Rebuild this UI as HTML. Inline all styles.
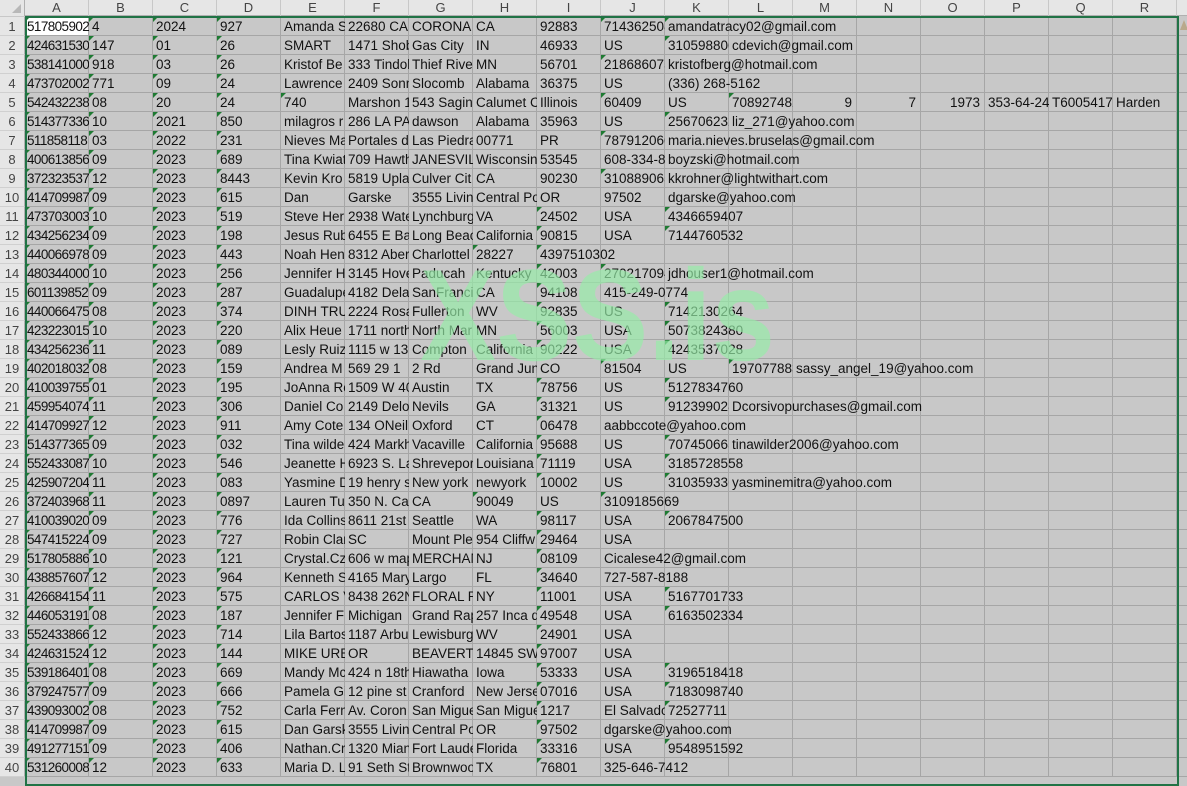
<!DOCTYPE html>
<html><head><meta charset="utf-8"><style>
*{margin:0;padding:0;box-sizing:border-box}
body{width:1187px;height:777px;overflow:hidden;background:#c8c8c8;font-family:"Liberation Sans",sans-serif;position:relative}
.hdr{position:absolute;left:0;top:0;width:1187px;height:16px;background:#e6e6e6;border-bottom:1px solid #b0b0b0;font-size:13px;color:#444}
.hdr span{position:absolute;top:0;width:64px;height:16px;line-height:16px;text-align:center;border-right:1px solid #c8c8c8}
.corner{position:absolute;left:0;top:0;width:25px;height:16px;background:#e6e6e6;border-right:1px solid #b0b0b0}
.corner:after{content:"";position:absolute;right:3px;bottom:3px;border-left:9px solid transparent;border-bottom:9px solid #b8b8b8}
.grid{position:absolute;left:25px;top:17px;width:1162px;height:760px;
background-image:linear-gradient(to right,#a6a6a6 1px,transparent 1px),linear-gradient(to bottom,#a6a6a6 1px,transparent 1px);
background-size:64px 19px;background-position:-1px 0,0 -1px}
.rows{position:absolute;left:0;top:17px}
.r{height:19px;white-space:nowrap;font-size:13.5px;line-height:19px;color:#111}
.r span{display:inline-block;vertical-align:top;width:64px;height:18px;position:relative;padding-left:3px}
.r span:not(:empty){background:#c8c8c8;border-right:1px solid #a6a6a6}
.r span:nth-child(2){letter-spacing:-0.6px;padding-left:2px}
.r span.h{width:25px;background:#e6e6e6;border-right:1px solid #b0b0b0;color:#444;text-align:center;padding:0;font-size:13px;height:19px;border-bottom:1px solid #d0d0d0;letter-spacing:0}
.r span.n{text-align:right;padding-right:4px}
.r span:nth-child(-n+5):not(:first-child):not(:empty):before,.r span.t:before{content:"";position:absolute;left:0;top:0;border-top:5px solid #1e7a32;border-right:5px solid transparent}
.r span.w{background:#fff}
.sel{position:absolute;left:25px;top:16px;width:1154px;height:770px;border:2px solid #217346}
.wm{position:absolute;left:0;top:0;z-index:5}
.warn{position:absolute;left:1180px;top:20px;border-left:4px solid transparent;border-right:4px solid transparent;border-bottom:10px solid #b9a98c}
</style></head><body>
<div class="grid"></div>
<div class="hdr"><span style="left:25px">A</span><span style="left:89px">B</span><span style="left:153px">C</span><span style="left:217px">D</span><span style="left:281px">E</span><span style="left:345px">F</span><span style="left:409px">G</span><span style="left:473px">H</span><span style="left:537px">I</span><span style="left:601px">J</span><span style="left:665px">K</span><span style="left:729px">L</span><span style="left:793px">M</span><span style="left:857px">N</span><span style="left:921px">O</span><span style="left:985px">P</span><span style="left:1049px">Q</span><span style="left:1113px">R</span></div>
<div class="corner"></div>
<div class="rows">
<div class="r"><span class="h">1</span><span class="w">517805902</span><span>4</span><span> 2024</span><span>927</span><span>Amanda S</span><span>22680 CAN</span><span>CORONA</span><span>CA</span><span>92883</span><span class="t">714362508</span><span class="t">amandatracy02@gmail.com</span></div>
<div class="r"><span class="h">2</span><span>424631530</span><span>147</span><span>01</span><span>26</span><span>SMART</span><span>1471 Shob</span><span>Gas City</span><span>IN</span><span>46933</span><span>US</span><span class="t">310598800</span><span>cdevich@gmail.com</span></div>
<div class="r"><span class="h">3</span><span>538141000</span><span>918</span><span>03</span><span>26</span><span>Kristof Be</span><span>333 Tindol</span><span>Thief Rive</span><span>MN</span><span>56701</span><span class="t">218686075</span><span>kristofberg@hotmail.com</span></div>
<div class="r"><span class="h">4</span><span>473702002</span><span>771</span><span>09</span><span>24</span><span>Lawrence</span><span>2409 Sonn</span><span>Slocomb</span><span>Alabama</span><span>36375</span><span>US</span><span>(336) 268-5162</span></div>
<div class="r"><span class="h">5</span><span>542432238</span><span>08</span><span>20</span><span>24</span><span class="t">740</span><span>Marshon 1</span><span>543 Sagina</span><span>Calumet C</span><span>Illinois</span><span class="t">60409</span><span>US</span><span class="t">708927482</span><span class="n">9</span><span class="n">7</span><span class="n">1973</span><span>353-64-24</span><span>T60054173</span><span>Harden</span></div>
<div class="r"><span class="h">6</span><span>514377336</span><span>10</span><span>2021</span><span>850</span><span>milagros r</span><span>286 LA PA</span><span>dawson</span><span>Alabama</span><span>35963</span><span>US</span><span class="t">256706232</span><span>liz_271@yahoo.com</span></div>
<div class="r"><span class="h">7</span><span>511858118</span><span>03</span><span>2022</span><span>231</span><span>Nieves Ma</span><span>Portales d</span><span>Las Piedra</span><span>00771</span><span>PR</span><span class="t">787912060</span><span>maria.nieves.bruselas@gmail.com</span></div>
<div class="r"><span class="h">8</span><span>400613856</span><span>09</span><span>2023</span><span>689</span><span>Tina Kwiat</span><span>709 Hawth</span><span>JANESVILL</span><span>Wisconsin</span><span>53545</span><span>608-334-8(</span><span>boyzski@hotmail.com</span></div>
<div class="r"><span class="h">9</span><span>372323537</span><span>12</span><span>2023</span><span>8443</span><span>Kevin Kro</span><span>5819 Uplai</span><span>Culver Cit</span><span>CA</span><span>90230</span><span class="t">310889065</span><span>kkrohner@lightwithart.com</span></div>
<div class="r"><span class="h">10</span><span>414709987</span><span>09</span><span>2023</span><span>615</span><span>Dan</span><span>Garske</span><span>3555 Livin</span><span>Central Po</span><span>OR</span><span>97502</span><span>dgarske@yahoo.com</span></div>
<div class="r"><span class="h">11</span><span>473703003</span><span>10</span><span>2023</span><span>519</span><span>Steve Her</span><span>2938 Wate</span><span>Lynchburg</span><span>VA</span><span class="t">24502</span><span>USA</span><span class="t">4346659407</span></div>
<div class="r"><span class="h">12</span><span>434256234</span><span>09</span><span>2023</span><span>198</span><span>Jesus Rub</span><span>6455 E Bay</span><span>Long Beac</span><span>California</span><span class="t">90815</span><span>USA</span><span class="t">7144760532</span></div>
<div class="r"><span class="h">13</span><span>440066978</span><span>09</span><span>2023</span><span>443</span><span>Noah Hen</span><span>8312 Aber</span><span>Charlottel</span><span class="t">28227</span><span class="t">4397510302</span></div>
<div class="r"><span class="h">14</span><span>480344000</span><span>10</span><span>2023</span><span>256</span><span>Jennifer H</span><span>3145 Hove</span><span>Paducah</span><span>Kentucky</span><span class="t">42003</span><span class="t">270217094</span><span>jdhouser1@hotmail.com</span></div>
<div class="r"><span class="h">15</span><span>601139852</span><span>09</span><span>2023</span><span>287</span><span>Guadalupe</span><span>4182 Dela</span><span>SanFranci</span><span>CA</span><span class="t">94108</span><span>415-249-0774</span></div>
<div class="r"><span class="h">16</span><span>440066475</span><span>08</span><span>2023</span><span>374</span><span>DINH TRU</span><span>2224 Rosa</span><span>Fullerton</span><span>WV</span><span class="t">92835</span><span>US</span><span class="t">7142130264</span></div>
<div class="r"><span class="h">17</span><span>423223015</span><span>10</span><span>2023</span><span>220</span><span>Alix Heue</span><span>1711 north</span><span>North Mar</span><span>MN</span><span class="t">56003</span><span>USA</span><span class="t">5073824380</span></div>
<div class="r"><span class="h">18</span><span>434256236</span><span>11</span><span>2023</span><span>089</span><span>Lesly Ruiz</span><span>1115 w 13</span><span>Compton</span><span>California</span><span class="t">90222</span><span>USA</span><span class="t">4243537028</span></div>
<div class="r"><span class="h">19</span><span>402018032</span><span>08</span><span>2023</span><span>159</span><span>Andrea M</span><span>569 29 1</span><span>2 Rd</span><span>Grand Jun</span><span>CO</span><span class="t">81504</span><span>US</span><span class="t">197077883</span><span>sassy_angel_19@yahoo.com</span></div>
<div class="r"><span class="h">20</span><span>410039755</span><span>01</span><span>2023</span><span>195</span><span>JoAnna Ro</span><span>1509 W 40</span><span>Austin</span><span>TX</span><span class="t">78756</span><span>US</span><span class="t">5127834760</span></div>
<div class="r"><span class="h">21</span><span>459954074</span><span>11</span><span>2023</span><span>306</span><span>Daniel Co</span><span>2149 Delo</span><span>Nevils</span><span>GA</span><span class="t">31321</span><span>US</span><span class="t">912399028</span><span>Dcorsivopurchases@gmail.com</span></div>
<div class="r"><span class="h">22</span><span>414709927</span><span>12</span><span>2023</span><span>911</span><span>Amy Cote</span><span>134 ONeil</span><span>Oxford</span><span>CT</span><span class="t">06478</span><span>aabbccote@yahoo.com</span></div>
<div class="r"><span class="h">23</span><span>514377365</span><span>09</span><span>2023</span><span>032</span><span>Tina wilde</span><span>424 Markh</span><span>Vacaville</span><span>California</span><span class="t">95688</span><span>US</span><span class="t">707450665</span><span>tinawilder2006@yahoo.com</span></div>
<div class="r"><span class="h">24</span><span>552433087</span><span>10</span><span>2023</span><span>546</span><span>Jeanette H</span><span>6923 S. La</span><span>Shrevepor</span><span>Louisiana</span><span class="t">71119</span><span>USA</span><span class="t">3185728558</span></div>
<div class="r"><span class="h">25</span><span>425907204</span><span>11</span><span>2023</span><span>083</span><span>Yasmine D</span><span>19 henry s</span><span>New york</span><span>newyork</span><span class="t">10002</span><span>US</span><span class="t">310359336</span><span>yasminemitra@yahoo.com</span></div>
<div class="r"><span class="h">26</span><span>372403968</span><span>11</span><span>2023</span><span>0897</span><span>Lauren Tu</span><span>350 N. Car</span><span>CA</span><span class="t">90049</span><span>US</span><span class="t">3109185669</span></div>
<div class="r"><span class="h">27</span><span>410039020</span><span>09</span><span>2023</span><span>776</span><span>Ida Collins</span><span>8611 21st ,</span><span>Seattle</span><span>WA</span><span class="t">98117</span><span>USA</span><span class="t">2067847500</span></div>
<div class="r"><span class="h">28</span><span>547415224</span><span>09</span><span>2023</span><span>727</span><span>Robin Clar</span><span>SC</span><span>Mount Ple</span><span>954 Cliffw</span><span class="t">29464</span><span>USA</span></div>
<div class="r"><span class="h">29</span><span>517805886</span><span>10</span><span>2023</span><span>121</span><span>Crystal.Cz</span><span>606 w map</span><span>MERCHAN</span><span>NJ</span><span class="t">08109</span><span>Cicalese42@gmail.com</span></div>
<div class="r"><span class="h">30</span><span>438857607</span><span>12</span><span>2023</span><span>964</span><span>Kenneth S</span><span>4165 Mary</span><span>Largo</span><span>FL</span><span class="t">34640</span><span>727-587-8188</span></div>
<div class="r"><span class="h">31</span><span>426684154</span><span>11</span><span>2023</span><span>575</span><span>CARLOS V</span><span>8438 262N</span><span>FLORAL PA</span><span>NY</span><span class="t">11001</span><span>USA</span><span class="t">5167701733</span></div>
<div class="r"><span class="h">32</span><span>446053191</span><span>08</span><span>2023</span><span>187</span><span>Jennifer F</span><span>Michigan</span><span>Grand Rap</span><span>257 Inca d</span><span class="t">49548</span><span>USA</span><span class="t">6163502334</span></div>
<div class="r"><span class="h">33</span><span>552433866</span><span>12</span><span>2023</span><span>714</span><span>Lila Bartos</span><span>1187 Arbu</span><span>Lewisburg</span><span>WV</span><span class="t">24901</span><span>USA</span></div>
<div class="r"><span class="h">34</span><span>424631524</span><span>12</span><span>2023</span><span>144</span><span>MIKE URBA</span><span>OR</span><span>BEAVERTO</span><span>14845 SW</span><span class="t">97007</span><span>USA</span></div>
<div class="r"><span class="h">35</span><span>539186401</span><span>08</span><span>2023</span><span>669</span><span>Mandy Mc</span><span>424 n 18th</span><span>Hiawatha</span><span>Iowa</span><span class="t">53333</span><span>USA</span><span class="t">3196518418</span></div>
<div class="r"><span class="h">36</span><span>379247577</span><span>09</span><span>2023</span><span>666</span><span>Pamela Gi</span><span>12 pine st</span><span>Cranford</span><span>New Jerse</span><span class="t">07016</span><span>USA</span><span class="t">7183098740</span></div>
<div class="r"><span class="h">37</span><span>439093002</span><span>08</span><span>2023</span><span>752</span><span>Carla Fern</span><span>Av. Coron</span><span>San Migue</span><span>San Migue</span><span class="t">1217</span><span>El Salvado</span><span class="t">72527711</span></div>
<div class="r"><span class="h">38</span><span>414709987</span><span>09</span><span>2023</span><span>615</span><span>Dan Garsk</span><span>3555 Livin</span><span>Central Po</span><span>OR</span><span class="t">97502</span><span>dgarske@yahoo.com</span></div>
<div class="r"><span class="h">39</span><span>491277151</span><span>09</span><span>2023</span><span>406</span><span>Nathan.Cr</span><span>1320 Mian</span><span>Fort Laude</span><span>Florida</span><span class="t">33316</span><span>USA</span><span class="t">9548951592</span></div>
<div class="r"><span class="h">40</span><span>531260008</span><span>12</span><span>2023</span><span>633</span><span>Maria D. L</span><span>91 Seth St</span><span>Brownwoo</span><span>TX</span><span class="t">76801</span><span>325-646-7412</span></div>
</div>
<svg class="wm" width="1187" height="777"><text x="420" y="360" font-family="Liberation Sans, sans-serif" font-weight="bold" font-size="130" textLength="355" lengthAdjust="spacingAndGlyphs" fill="rgb(150,238,168)" fill-opacity="0.68">XSS.is</text></svg>
<div class="sel"></div>
<div class="warn"></div>
</body></html>
